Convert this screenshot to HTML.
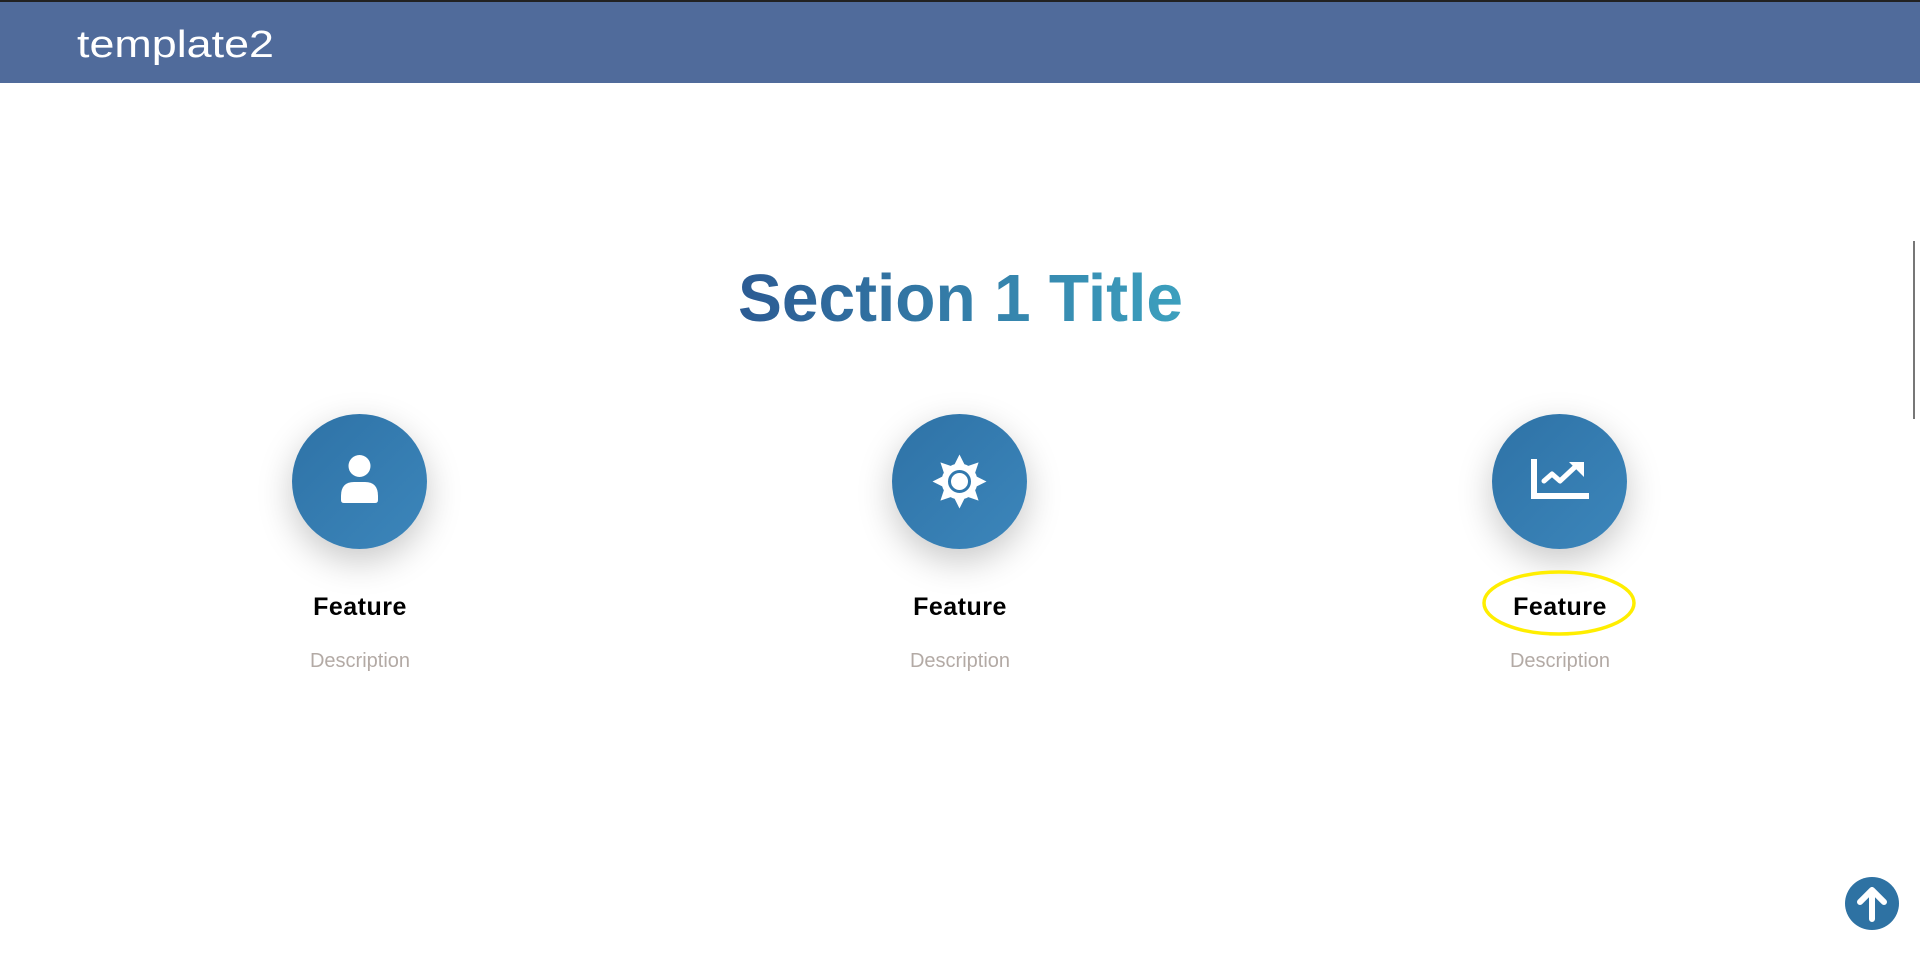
<!DOCTYPE html>
<html><head><meta charset="utf-8"><style>
html,body{margin:0;padding:0;width:1920px;height:953px;overflow:hidden;background:#fff;font-family:"Liberation Sans",sans-serif;position:relative}
.hdr{position:absolute;left:0;top:0;width:1920px;height:83px;background:#506b9b;border-top:2px solid #222;box-sizing:border-box}
.circ{position:absolute;width:135px;height:135px;border-radius:50%;background:linear-gradient(135deg,#2e72a6,#3c86bb);box-shadow:0 12px 35px rgba(0,0,0,.22)}
.circ svg{position:absolute;left:0;top:0}
.feat{position:absolute;width:300px;text-align:center;font-size:25px;font-weight:bold;letter-spacing:0.5px;color:#000;top:593px}
.desc{position:absolute;width:300px;text-align:center;font-size:20px;color:#b3aaa5;top:650px}
.scroll{position:absolute;left:1913px;top:241px;width:2px;height:178px;background:#777}
.up{position:absolute;left:1845px;top:877px;width:54px;height:53px;border-radius:50%;background:#2e72a3}
</style></head><body>
<div class="hdr"></div>
<svg style="position:absolute;left:0;top:0" width="400" height="83"><text x="77" y="57" fill="#fff" font-family="Liberation Sans, sans-serif" font-size="38" textLength="197" lengthAdjust="spacingAndGlyphs">template2</text></svg>
<svg style="position:absolute;top:0;left:700px" width="520" height="360">
<defs><linearGradient id="g" x1="0" x2="1"><stop offset="0" stop-color="#2c5b93"/><stop offset="1" stop-color="#3ca0be"/></linearGradient></defs>
<text x="38" y="321" fill="url(#g)" font-family="Liberation Sans, sans-serif" font-weight="bold" font-size="67" textLength="445" lengthAdjust="spacingAndGlyphs">Section 1 Title</text></svg>

<div class="circ" style="left:292px;top:414px"><svg width="135" height="135">
<circle cx="67.5" cy="52" r="11" fill="#fff"/><path d="M49 82 Q49 68 62 68 H73 Q86 68 86 82 V86 Q86 89 83 89 H52 Q49 89 49 86Z" fill="#fff"/></svg></div>
<div class="circ" style="left:892px;top:414px"><svg width="135" height="135">
<g fill="#fff" transform="translate(67.5,67.5)">
<polygon points="0,-27 5,-17 -5,-17"/><polygon points="0,-27 5,-17 -5,-17" transform="rotate(45)"/><polygon points="0,-27 5,-17 -5,-17" transform="rotate(90)"/><polygon points="0,-27 5,-17 -5,-17" transform="rotate(135)"/><polygon points="0,-27 5,-17 -5,-17" transform="rotate(180)"/><polygon points="0,-27 5,-17 -5,-17" transform="rotate(225)"/><polygon points="0,-27 5,-17 -5,-17" transform="rotate(270)"/><polygon points="0,-27 5,-17 -5,-17" transform="rotate(315)"/>
<circle r="18"/></g><circle cx="67.5" cy="67.5" r="10" fill="none" stroke="#3178ad" stroke-width="3"/></svg></div>
<div class="circ" style="left:1492px;top:414px"><svg width="135" height="135">
<path d="M42 45 V82 H97" fill="none" stroke="#fff" stroke-width="6"/>
<path d="M52 67 L60 60 L68 67 L83 53" fill="none" stroke="#fff" stroke-width="5" stroke-linecap="round" stroke-linejoin="round"/>
<polygon points="77,48 92,48 92,63" fill="#fff"/></svg></div>

<div class="feat" style="left:210px">Feature</div>
<div class="feat" style="left:810px">Feature</div>
<div class="feat" style="left:1410px">Feature</div>
<div class="desc" style="left:210px">Description</div>
<div class="desc" style="left:810px">Description</div>
<div class="desc" style="left:1410px">Description</div>
<svg style="position:absolute;left:1478px;top:567px" width="162" height="72"><ellipse cx="81" cy="36" rx="75" ry="31" fill="none" stroke="#ffee00" stroke-width="3.5"/></svg>
<div class="scroll"></div>
<div class="up"><svg width="54" height="53"><path d="M27 42 V13 M15 25 L27 13 L39 25" fill="none" stroke="#fff" stroke-width="6" stroke-linecap="round" stroke-linejoin="round"/></svg></div>
</body></html>
